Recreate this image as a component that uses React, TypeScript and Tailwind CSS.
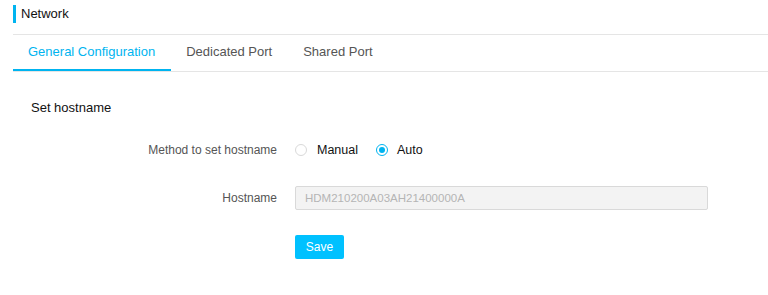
import React, { useState } from 'react';

const tabs = ['General Configuration', 'Dedicated Port', 'Shared Port'];

export default function App() {
  const [active, setActive] = useState(0);
  const [method, setMethod] = useState<'manual' | 'auto'>('auto');

  return (
    <div className="w-[768px] h-[295px] bg-white pl-[13px] text-[13px] text-[#333] font-['Liberation_Sans',sans-serif]">
      {/* page title */}
      <div className="h-[35px] border-b border-[#e5e5e5] pt-[5px]">
        <div className="flex items-center h-[18px] gap-[5px]">
          <span className="w-[3px] h-[18px] bg-[#00b4f0]" />
          <span className="text-[#111]">Network</span>
        </div>
      </div>

      {/* tabs */}
      <div className="flex h-[37px] border-b border-[#e5e5e5]">
        {tabs.map((t, i) => (
          <button
            key={t}
            onClick={() => setActive(i)}
            className={`pl-[15px] pr-[16px] h-[36px] border-b-2 ${
              i === active ? 'border-[#00b4f0] text-[#00b4f0]' : 'border-transparent text-[#555]'
            }`}
          >
            {t}
          </button>
        ))}
      </div>

      <div className="pl-[18px] pt-[27px] text-[#111] leading-[18px]">Set hostname</div>

      <div className="mt-[21px] grid grid-cols-[264px_1fr] gap-x-[18px] items-center text-[12px]">
        <div className="text-right text-[#555] h-[24px] leading-[24px]">Method to set hostname</div>
        <div className="flex items-center h-[24px] text-[13px]">
          <label className="flex items-center gap-[10px] cursor-pointer" onClick={() => setMethod('manual')}>
            <span
              className={`w-[12px] h-[12px] rounded-full border flex items-center justify-center ${
                method === 'manual' ? 'border-[#00b4f0]' : 'border-[#d9d9d9]'
              }`}
            >
              {method === 'manual' && <span className="w-[6px] h-[6px] rounded-full bg-[#00b4f0]" />}
            </span>
            <span className="text-[#111] text-[12.5px]">Manual</span>
          </label>
          <label className="flex items-center gap-[9px] ml-[18px] cursor-pointer" onClick={() => setMethod('auto')}>
            <span
              className={`w-[12px] h-[12px] rounded-full border flex items-center justify-center ${
                method === 'auto' ? 'border-[#00b4f0]' : 'border-[#d9d9d9]'
              }`}
            >
              {method === 'auto' && <span className="w-[6px] h-[6px] rounded-full bg-[#00b4f0]" />}
            </span>
            <span className="text-[#111] text-[12.5px]">Auto</span>
          </label>
        </div>

        <div className="text-right text-[#555] mt-[24px] h-[24px] leading-[24px]">Hostname</div>
        <div className="mt-[24px]">
          <input
            disabled
            value="HDM210200A03AH21400000A"
            className="w-[413px] h-[24px] bg-[#f3f3f3] border border-[#d9d9d9] rounded-[2px] px-[9px] text-[#b5b5b5] text-[11.5px]"
          />
        </div>

        <div />
        <div className="mt-[25px]">
          <button className="w-[49px] h-[24px] bg-[#00c1ff] text-white rounded-[2px] text-[12px]">Save</button>
        </div>
      </div>
    </div>
  );
}
